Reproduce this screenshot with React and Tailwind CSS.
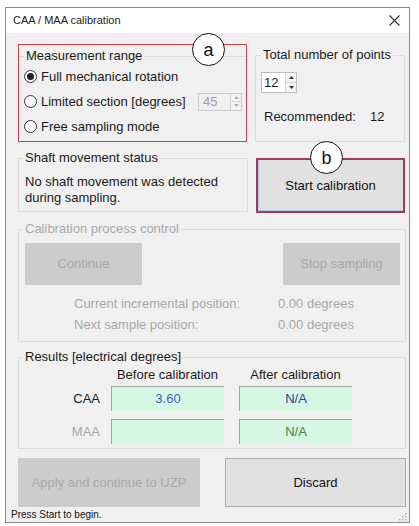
import React from 'react';

function Radio({ checked, children }) {
  return (
    <div className="flex items-center h-[25px] -ml-[2px]">
      <div className="w-[13px] h-[13px] rounded-full border border-[#333333] bg-white flex items-center justify-center shrink-0">
        {checked && <div className="w-[7px] h-[7px] rounded-full bg-[#222222]" />}
      </div>
      <div className="ml-[4px] flex items-center">{children}</div>
    </div>
  );
}

function Arrows({ disabled }) {
  const c = disabled ? '#b0b0b0' : '#333333';
  return (
    <div className="flex flex-col w-[11px] h-full border-l border-[#d4d4d4] bg-[#f4f4f4]">
      <div className="flex-1 flex items-center justify-center border-b border-[#d4d4d4]">
        <svg width="5" height="3" viewBox="0 0 5 3"><path d="M0 3 L2.5 0 L5 3Z" fill={c} /></svg>
      </div>
      <div className="flex-1 flex items-center justify-center">
        <svg width="5" height="3" viewBox="0 0 5 3"><path d="M0 0 L2.5 3 L5 0Z" fill={c} /></svg>
      </div>
    </div>
  );
}

export default function App() {
  return (
    <div className="relative w-[419px] h-[526px] bg-white pt-[7px] pl-[5px] font-['Liberation_Sans',Arial,sans-serif] text-[13px] text-[#1a1a1a]">
      <div className="w-[405px] h-[516px] border border-[#8a8a8a] flex flex-col bg-[#f0f0f0]">
        {/* Title bar */}
        <div className="h-[25px] bg-white flex items-center justify-between pl-[7px] pr-[9px]">
          <span className="text-[11px] text-[#222222]">CAA / MAA calibration</span>
          <svg width="11" height="11" viewBox="0 0 11 11">
            <path d="M0.5 0.5 L10.5 10.5 M10.5 0.5 L0.5 10.5" stroke="#333333" strokeWidth="1.1" />
          </svg>
        </div>

        {/* Body */}
        <div className="h-[474px] flex flex-col pl-[12px] pr-[3px]">
          {/* Row 1 */}
          <div className="mt-[11px] h-[98px] flex items-start gap-[8px]">
            <div className="w-[229px] h-[98px] border border-[#d64045] pt-[3px]">
              <fieldset className="h-[92px] border-t border-[#dcdcdc] pl-[7px]">
                <legend className="-ml-[2px] px-[2px] leading-[16px]">Measurement range</legend>
                <Radio checked>Full mechanical rotation</Radio>
                <Radio>
                  <span className="w-[157px]">Limited section [degrees]</span>
                  <div className="w-[44px] h-[18px] border border-[#cccccc] bg-[#f0f0f0] flex">
                    <span className="flex-1 pl-[4px] leading-[16px] text-[#a0a0a0]">45</span>
                    <Arrows disabled />
                  </div>
                </Radio>
                <Radio>Free sampling mode</Radio>
              </fieldset>
            </div>
            <fieldset className="w-[150px] mt-[3px] h-[95px] border border-[#dcdcdc] pl-[7px]">
              <legend className="-ml-[2px] px-[2px] leading-[16px]">Total number of points</legend>
              <div className="-ml-[2px] mt-[9px] w-[36px] h-[21px] border border-[#bdbdbd] bg-white flex">
                <span className="flex-1 pl-[2px] leading-[19px]">12</span>
                <Arrows />
              </div>
              <div className="ml-[1px] mt-[16px] flex leading-[16px]">
                <span className="w-[106px]">Recommended:</span>
                <span>12</span>
              </div>
            </fieldset>
          </div>

          {/* Row 2 */}
          <div className="mt-[8px] h-[63px] flex items-start gap-[8px]">
            <fieldset className="w-[230px] h-[62px] border border-[#dcdcdc] pl-[6px]">
              <legend className="-ml-[2px] px-[2px] leading-[16px]">Shaft movement status</legend>
              <div className="mt-[8px] leading-[16px]">
                No shaft movement was detected<br />during sampling.
              </div>
            </fieldset>
            <button className="mt-[8px] w-[149px] h-[55px] bg-[#e1e1e1] border-2 border-[#a23a5c] shadow-[inset_1px_-1px_0_#a9cdea] text-[13px] text-[#111111]">
              Start calibration
            </button>
          </div>

          {/* Row 3 */}
          <fieldset className="mt-[8px] h-[121px] border border-[#dcdcdc] pl-[6px] pr-[5px]">
            <legend className="-ml-[2px] px-[2px] leading-[16px] text-[#a8a8a8]">Calibration process control</legend>
            <div className="mt-[6px] flex justify-between">
              <div className="w-[117px] h-[42px] bg-[#cccccc] flex items-center justify-center text-[#a9a9a9]">Continue</div>
              <div className="w-[117px] h-[42px] bg-[#cccccc] flex items-center justify-center text-[#a9a9a9]">Stop sampling</div>
            </div>
            <div className="mt-[11px] pl-[49px] flex leading-[16px] text-[#a8a8a8]">
              <span className="w-[204px]">Current incremental position:</span>
              <span>0.00 degrees</span>
            </div>
            <div className="mt-[5px] pl-[49px] flex leading-[16px] text-[#a8a8a8]">
              <span className="w-[204px]">Next sample position:</span>
              <span>0.00 degrees</span>
            </div>
          </fieldset>

          {/* Row 4 */}
          <fieldset className="mt-[7px] h-[100px] border border-[#dcdcdc] pl-[6px] pr-[5px]">
            <legend className="-ml-[2px] px-[2px] leading-[16px]">Results [electrical degrees]</legend>
            <div className="mt-[2px] flex leading-[16px]">
              <span className="w-[86px]" />
              <span className="w-[113px] text-center">Before calibration</span>
              <span className="w-[113px] ml-[15px] text-center">After calibration</span>
            </div>
            <div className="mt-[3px] flex items-center h-[25px]">
              <span className="w-[75px] text-right">CAA</span>
              <div className="ml-[11px] w-[113px] h-[25px] bg-[#d5f7e4] border-t border-l border-[#a3a3a3] text-center leading-[24px] text-[#3860c8]">3.60</div>
              <div className="ml-[15px] w-[113px] h-[25px] bg-[#d5f7e4] border-t border-l border-[#a3a3a3] text-center leading-[24px] text-[#1e3f9e]">N/A</div>
            </div>
            <div className="mt-[8px] flex items-center h-[25px]">
              <span className="w-[75px] text-right text-[#a8a8a8]">MAA</span>
              <div className="ml-[11px] w-[113px] h-[25px] bg-[#d5f7e4] border-t border-l border-[#a3a3a3]" />
              <div className="ml-[15px] w-[113px] h-[25px] bg-[#d5f7e4] border-t border-l border-[#a3a3a3] text-center leading-[24px] text-[#3b8a48]">N/A</div>
            </div>
          </fieldset>

          {/* Row 5 */}
          <div className="mt-[9px] h-[49px] flex justify-between">
            <div className="w-[182px] h-[49px] bg-[#cccccc] flex items-center justify-center text-[#a9a9a9]">Apply and continue to UZP</div>
            <button className="w-[181px] h-[49px] bg-[#e1e1e1] border border-[#adadad] text-[13px] text-[#111111]">Discard</button>
          </div>
        </div>

        {/* Status bar */}
        <div className="flex-1 flex items-center justify-between pl-[5px] pr-[2px]">
          <span className="text-[10px] text-[#111111] leading-[12px]">Press Start to begin.</span>
          <svg width="8" height="8" viewBox="0 0 8 8" className="self-end mb-[1px]">
            <rect x="6" y="0" width="1.5" height="1.5" fill="#b0b0b0" />
            <rect x="3" y="3" width="1.5" height="1.5" fill="#b0b0b0" />
            <rect x="6" y="3" width="1.5" height="1.5" fill="#b0b0b0" />
            <rect x="0" y="6" width="1.5" height="1.5" fill="#b0b0b0" />
            <rect x="3" y="6" width="1.5" height="1.5" fill="#b0b0b0" />
            <rect x="6" y="6" width="1.5" height="1.5" fill="#b0b0b0" />
          </svg>
        </div>
      </div>

      {/* Annotation circles */}
      <div className="absolute left-[192px] top-[33px] w-[33px] h-[33px] rounded-full border border-[#111111] bg-white flex items-center justify-center text-[18px] leading-none text-[#111111]">
        a
      </div>
      <div className="absolute left-[310px] top-[141px] w-[33px] h-[33px] rounded-full border border-[#111111] bg-white flex items-center justify-center text-[18px] leading-none text-[#111111]">
        b
      </div>
    </div>
  );
}
